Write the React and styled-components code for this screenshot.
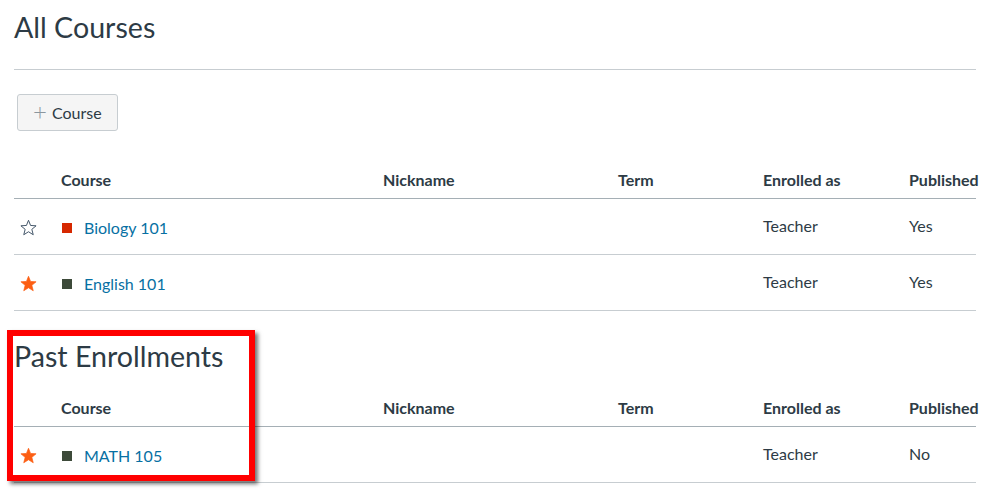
import React from 'react'
import styled, { createGlobalStyle } from 'styled-components'

const GlobalStyle = createGlobalStyle`
  *, *::before, *::after { box-sizing: border-box; }
  body {
    margin: 0;
    background: #fff;
    font-family: Lato, "Helvetica Neue", Arial, sans-serif;
    color: #2d3b45;
  }
`

const courses = [
  { name: 'Biology 101', color: '#d62800', fav: false, role: 'Teacher', published: 'Yes' },
  { name: 'English 101', color: '#3d4a3a', fav: true, role: 'Teacher', published: 'Yes' },
]

const past = [
  { name: 'MATH 105', color: '#3d4a3a', fav: true, role: 'Teacher', published: 'No' },
]

const Star = ({ filled }) => (
  <svg width="17" height="17" viewBox="0 0 24 24">
    <path
      d="M12 1.8l2.9 7.3 7.8.5-6 5 2 7.6L12 18l-6.7 4.2 2-7.6-6-5 7.8-.5z"
      fill={filled ? '#fc5e13' : 'none'}
      stroke={filled ? '#fc5e13' : '#34495e'}
      strokeWidth={filled ? 1 : 1.3}
      strokeLinejoin="round"
    />
  </svg>
)

const CourseTable = ({ rows, spaced }) => (
  <Table spaced={spaced}>
    <HeadRow>
      <span />
      <HeadCell>Course</HeadCell>
      <HeadCell>Nickname</HeadCell>
      <HeadCell>Term</HeadCell>
      <HeadCell>Enrolled as</HeadCell>
      <HeadCell>Published</HeadCell>
    </HeadRow>
    {rows.map(r => (
      <Row key={r.name}>
        <StarCell><Star filled={r.fav} /></StarCell>
        <CourseCell>
          <Swatch color={r.color} />
          <CourseLink>{r.name}</CourseLink>
        </CourseCell>
        <Cell />
        <Cell />
        <Cell>{r.role}</Cell>
        <Cell>{r.published}</Cell>
      </Row>
    ))}
  </Table>
)

const App = () => (
  <Page>
    <GlobalStyle />
    <Title>All Courses</Title>
    <Divider />
    <AddButton><Plus>+</Plus>Course</AddButton>
    <CourseTable rows={courses} spaced />
    <Section>
      <SubTitle>Past Enrollments</SubTitle>
      <CourseTable rows={past} />
      <Highlight />
    </Section>
  </Page>
)

export default App

const Page = styled.div`
  width: 976px;
  padding: 0 0 20px 14px;
`

const Title = styled.h1`
  margin: 0;
  padding-top: 10px;
  font-size: 28.6px;
  font-weight: 400;
  line-height: 34px;
`

const Divider = styled.hr`
  margin: 25px 0 0;
  border: 0;
  border-top: 1px solid #c7cdd1;
`

const AddButton = styled.button`
  display: flex;
  align-items: center;
  margin: 24px 0 0 3px;
  height: 37px;
  padding: 0 15px 0 15px;
  background: #f5f5f5;
  border: 1px solid #c7cdd1;
  border-radius: 3px;
  font-family: Lato, Arial, sans-serif;
  font-size: 16px;
  color: #2d3b45;
`

const Plus = styled.span`
  font-size: 24px;
  font-weight: 300;
  color: #8b969e;
  margin-right: 5px;
  line-height: 1;
  margin-top: -3px;
`

const Table = styled.div`
  display: flex;
  flex-direction: column;
  margin-top: ${p => (p.spaced ? '30px' : '0')};
`

const grid = `
  display: grid;
  grid-template-columns: 47px 322px 235px 145px 146px 67px;
  align-items: center;
`

const HeadRow = styled.div`
  ${grid}
  height: 38px;
  border-bottom: 1px solid #a5afb5;
`

const HeadCell = styled.span`
  font-size: 16px;
  font-weight: 700;
  color: #2d3b45;
  white-space: nowrap;
  margin-top: -1px;
`

const Row = styled.div`
  ${grid}
  height: 56px;
  border-bottom: 1px solid #c7cdd1;
`

const StarCell = styled.span`
  display: flex;
  padding-left: 6px;
  padding-top: 1px;
`

const CourseCell = styled.span`
  display: flex;
  align-items: center;
  padding-top: 2px;
`

const Swatch = styled.span`
  width: 10px;
  height: 10px;
  margin: 0 12px 0 1px;
  background: ${p => p.color};
`

const CourseLink = styled.a`
  color: #0770a3;
  font-size: 16px;
  cursor: pointer;
`

const Cell = styled.span`
  font-size: 16px;
  color: #2d3b45;
  margin-top: -2px;
`

const Section = styled.section`
  position: relative;
`

const SubTitle = styled.h2`
  margin: 0;
  padding-top: 28px;
  height: 78px;
  font-size: 28.6px;
  font-weight: 400;
  line-height: 34px;
`

const Highlight = styled.div`
  position: absolute;
  left: -7px;
  top: 19px;
  width: 248px;
  height: 151px;
  border: 6px solid #ff0000;
  box-shadow: 3px 3px 4px rgba(0, 0, 0, 0.55);
  pointer-events: none;
`
